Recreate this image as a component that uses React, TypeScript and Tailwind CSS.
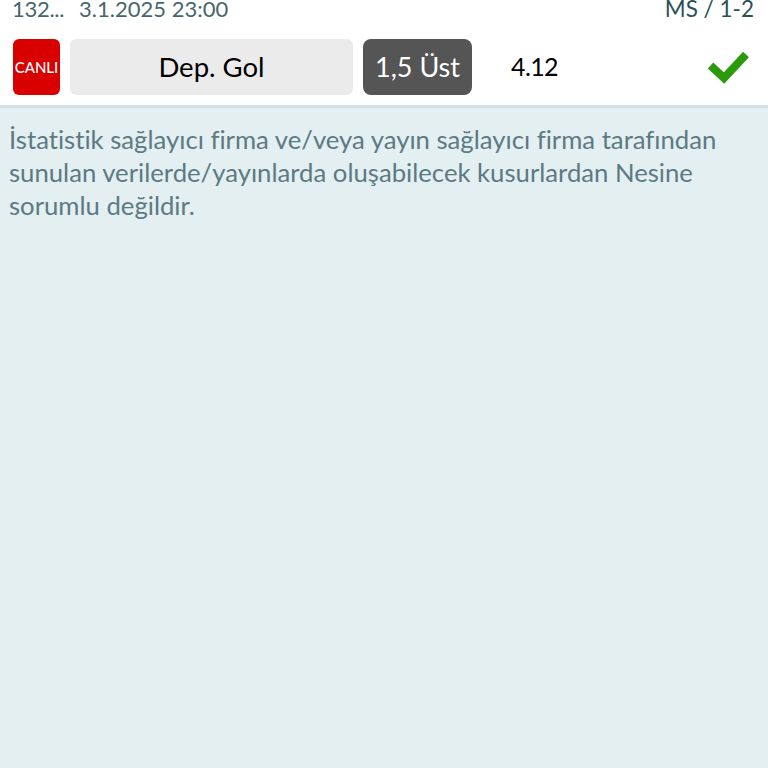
export default function App() {
  return (
    <div className="w-[768px] h-[768px] overflow-hidden bg-[#e3eff1] font-['Lato','Noto_Sans',sans-serif] [font-variant-ligatures:none]">
      {/* Bet row */}
      <div className="bg-white border-b-[3px] border-[#d0e0e3] h-[108px]">
        <div className="flex justify-between h-[24px] overflow-hidden pl-[12px] pr-[14px] text-[22px] leading-[18px] text-[#46666c]">
          <div className="flex gap-[15px]">
            <span className="tracking-[-0.3px]">132...</span>
            <span>3.1.2025 23:00</span>
          </div>
          <span className="text-[#2c5056] text-[22.5px]">MS / 1-2</span>
        </div>
        <div className="flex items-center h-[56px] mt-[15px] pl-[13px]">
          <div className="flex items-center justify-center w-[47px] h-[56px] rounded-[6px] bg-[#d90000] text-white text-[15px] font-medium">
            CANLI
          </div>
          <div className="flex items-center justify-center w-[283px] h-[56px] ml-[10px] rounded-[6px] bg-[#ebebeb] text-black text-[27.5px]">
            Dep. Gol
          </div>
          <div className="flex items-center justify-center w-[109px] h-[56px] ml-[10px] rounded-[8px] bg-[#555555] text-white text-[27px]">
            1,5 Üst
          </div>
          <span className="ml-[39px] text-[25px] tracking-[-0.6px] text-black">4.12</span>
          <svg className="ml-auto mr-[17px]" width="44" height="34" viewBox="0 0 44 34">
            <path d="M3.5 15.5 L17 28 L39 4.5" fill="none" stroke="#2a9a0a" strokeWidth="8" />
          </svg>
        </div>
      </div>
      {/* Disclaimer */}
      <p className="px-[9px] pt-[15px] text-[25.7px] leading-[33px] text-[#5c7a84]">
        İstatistik sağlayıcı firma ve/veya yayın sağlayıcı firma tarafından sunulan verilerde/yayınlarda oluşabilecek kusurlardan Nesine sorumlu değildir.
      </p>
    </div>
  );
}
